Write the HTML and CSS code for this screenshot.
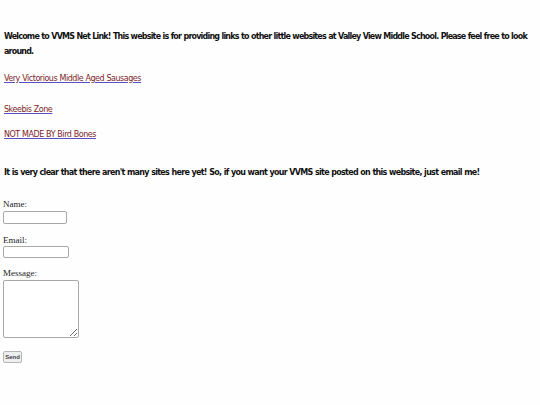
FILE: index.html
```html
<!DOCTYPE html>
<html>
<head>
<meta charset="utf-8">
<link rel="stylesheet" href="styles.css">
</head>
<body>
<main class="page">
  <p class="intro">Welcome to VVMS Net Link! This website is for providing links to other little websites at Valley View Middle School. Please feel free to look around.</p>
  <p class="link-row first"><a class="site-link" href="#">Very Victorious Middle Aged Sausages</a></p>
  <p class="link-row second"><a class="site-link" href="#">Skeebis Zone</a></p>
  <p class="link-row third"><a class="site-link" href="#">NOT MADE BY Bird Bones</a></p>
  <p class="note">It is very clear that there aren't many sites here yet! So, if you want your VVMS site posted on this website, just email me!</p>
  <form class="contact">
    <label class="field-label name-label" for="name">Name:</label>
    <input class="field name-field" id="name" type="text">
    <label class="field-label email-label" for="email">Email:</label>
    <input class="field email-field" id="email" type="email">
    <label class="field-label msg-label" for="msg">Message:</label>
    <textarea class="field msg-field" id="msg"></textarea>
    <button class="send" type="button">Send</button>
  </form>
</main>
</body>
</html>
```
FILE: styles.css
```css
html, body {
  margin: 0;
  padding: 0;
  background: #fefefe;
}
.page {
  padding: 0 2px 0 4px;
  font-family: "DejaVu Sans Condensed", "DejaVu Sans", sans-serif;
  color: #111;
}
.intro, .note {
  font-weight: bold;
  font-size: 8.9px;
  letter-spacing: -0.7px;
  word-spacing: 0.3px;
  line-height: 15px;
  margin: 0;
}
.intro {
  padding-top: 29px;
  letter-spacing: -0.8px;
}
.link-row {
  margin: 0;
  font-size: 8.9px;
  letter-spacing: -0.45px;
  word-spacing: 0.2px;
  line-height: 15px;
}
.link-row.first { margin-top: 12px; }
.link-row.second { margin-top: 16px; }
.link-row.third { margin-top: 10px; }
.site-link {
  color: #7d1e2a;
  text-decoration: underline;
  text-decoration-color: #5a4fc4;
}
.note {
  margin-top: 23px;
}
.contact {
  display: flex;
  flex-direction: column;
  align-items: flex-start;
  margin-left: -1px;
  font-family: "Liberation Serif", serif;
}
.field-label {
  font-size: 9px;
  line-height: 10px;
  color: #222;
}
.name-label { margin-top: 19px; }
.email-label { margin-top: 11px; }
.msg-label { margin-top: 10px; }
.field {
  box-sizing: border-box;
  border: 1px solid #a9a9a9;
  border-radius: 2px;
  background: #fff;
  padding: 0;
  margin: 0;
}
.name-field {
  margin-top: 2px;
  width: 64px;
  height: 13px;
}
.email-field {
  margin-top: 1px;
  width: 66px;
  height: 12px;
}
.msg-field {
  margin-top: 2px;
  width: 76px;
  height: 58px;
  resize: both;
}
.send {
  margin-top: 13px;
  width: 19px;
  height: 12px;
  padding: 0;
  font-family: "Liberation Sans", sans-serif;
  font-weight: bold;
  font-size: 6px;
  line-height: 10px;
  color: #444;
  background: #efefef;
  border: 1px solid #b5b5b5;
  border-radius: 2px;
}
```
